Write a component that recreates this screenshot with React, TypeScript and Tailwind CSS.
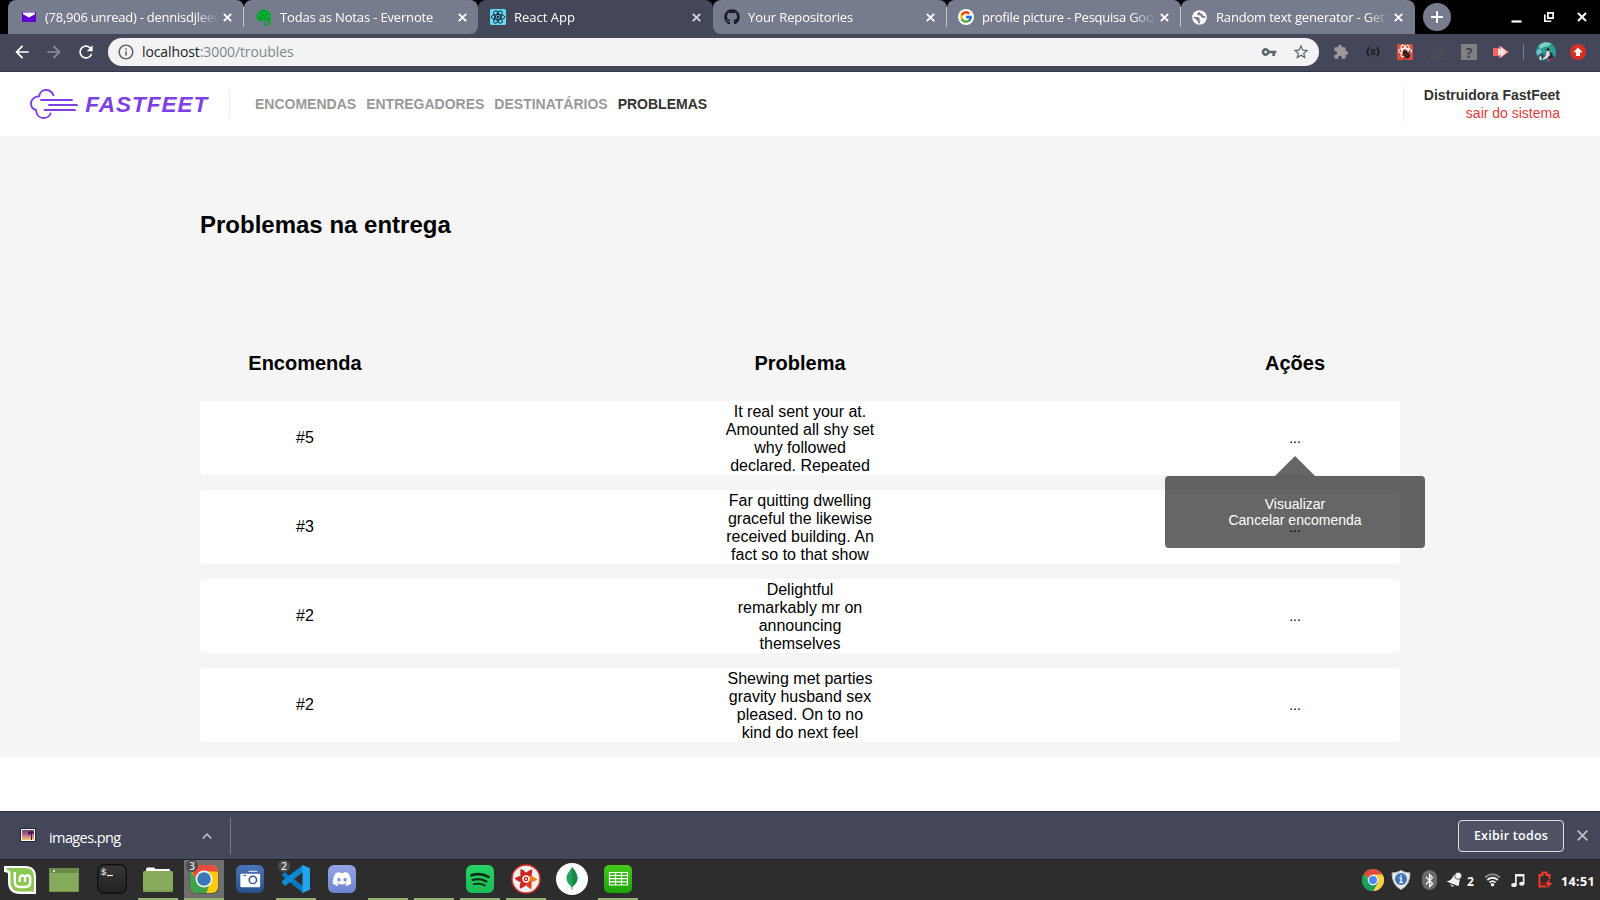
import React from 'react';
import { SiEvernote } from 'react-icons/si';
import { FaGithub, FaDiscord, FaBluetoothB } from 'react-icons/fa';
import { FcGoogle } from 'react-icons/fc';
import { MdVpnKey, MdStarBorder, MdExtension, MdArrowBack, MdArrowForward, MdRefresh, MdInfoOutline } from 'react-icons/md';

const uiFont = "font-['Open_Sans','Noto_Sans',sans-serif]";

function YahooMail() {
  return (
    <svg className="h-[10px] w-[14px]" viewBox="0 0 14 10">
      <rect width="14" height="10" fill="#5f01d1" />
      <path d="M1 .5h12v1.7L7 5.6 1 2.2z" fill="#fff" />
    </svg>
  );
}

function ReactBadge() {
  return (
    <svg className="size-4" viewBox="0 0 16 16">
      <rect width="16" height="16" rx="1.5" fill="#61dafb" />
      <g fill="none" stroke="#20303a" strokeWidth="1">
        <ellipse cx="8" cy="8" rx="6.8" ry="2.6" />
        <ellipse cx="8" cy="8" rx="6.8" ry="2.6" transform="rotate(60 8 8)" />
        <ellipse cx="8" cy="8" rx="6.8" ry="2.6" transform="rotate(120 8 8)" />
      </g>
      <circle cx="8" cy="8" r="1.5" fill="#20303a" />
    </svg>
  );
}

function Globe() {
  return (
    <svg className="size-[15px]" viewBox="0 0 15 15">
      <circle cx="7.5" cy="7.5" r="7.3" fill="#fff" />
      <path d="M8.500 1.500L5.500 3q-1 1.500.5 2.300l2.500.2 1 2 3.800.5V6.300l-2.300-.5-1-2L8 3.300z" fill="#777b8e" />
      <path d="M1.500 7h4.300l2 1.500-.5 1.800 1.200.5-.8 2.700-1.500-.3-.3-2.500-1.800-.5L3.500 8.500l-2-.2z" fill="#777b8e" />
    </svg>
  );
}

type TabInfo = { title: string; icon: React.ReactNode; active?: boolean; sep?: boolean; spacing: string; shape: string; width: string };

const tabs: TabInfo[] = [
  { title: '(78,906 unread) - dennisdjlee@', icon: <YahooMail />, sep: true, spacing: 'tracking-[-0.25px]', shape: 'pl-3 rounded-t-lg', width: 'w-[236px]' },
  { title: 'Todas as Notas - Evernote', icon: <SiEvernote className="size-[17px] text-[#00a82d]" />, spacing: 'tracking-[-0.16px]', shape: 'pl-[11px] rounded-t-lg rounded-br-lg', width: 'w-[234px]' },
  { title: 'React App', icon: <ReactBadge />, active: true, spacing: 'tracking-[0px]', shape: 'pl-[11px] rounded-t-lg', width: 'w-[235px]' },
  { title: 'Your Repositories', icon: <FaGithub className="size-4 text-[#1b1f23]" />, sep: true, spacing: 'tracking-[-0.1px]', shape: 'pl-[10px] rounded-t-lg rounded-bl-lg', width: 'w-[234px]' },
  {
    title: 'profile picture - Pesquisa Google',
    icon: <span className="flex size-4 items-center justify-center rounded-full bg-white"><FcGoogle className="size-[14px]" /></span>,
    sep: true, spacing: 'tracking-[-0.24px]', shape: 'pl-[10px] rounded-t-lg', width: 'w-[234px]',
  },
  { title: 'Random text generator - Get it', icon: <Globe />, spacing: 'tracking-[-0.18px]', shape: 'pl-[10px] rounded-t-lg', width: 'w-[234px]' },
];

function Tab({ tab }: { tab: TabInfo }) {
  return (
    <div className={`flex h-[34px] items-center ${tab.width} ${tab.shape} ${tab.active ? 'bg-[#44475a]' : 'bg-[#777b8e]'}`}>
      <span className="flex w-[17px] shrink-0 justify-center">{tab.icon}</span>
      <span className={`ml-2 w-[174px] shrink-0 overflow-hidden text-[13px] leading-[18px] whitespace-nowrap text-white [mask-image:linear-gradient(to_right,#000_150px,transparent_174px)] ${tab.spacing}`}>{tab.title}</span>
      <svg className="ml-[4px] size-[9px] shrink-0" viewBox="0 0 9 9">
        <path d="M.8.8l7.400 7.400M8.200.8L.8 8.200" stroke={tab.active ? '#d5d6dc' : '#fff'} strokeWidth="1.900" />
      </svg>
      {tab.sep && <span className="ml-auto h-5 w-px shrink-0 bg-[#c3c5cd]" />}
    </div>
  );
}

function TabStrip() {
  return (
    <div className="flex h-[34px] bg-black pl-2">
      {tabs.map((tab, i) => (
        <div key={tab.title} className={i === 1 || i === 3 ? 'bg-linear-to-b from-black from-50% to-[#44475a] to-50%' : ''}>
          <Tab tab={tab} />
        </div>
      ))}
      <div className="ml-2 flex h-[34px] items-center">
        <span className="flex size-7 items-center justify-center rounded-full bg-[#777b8e]">
          <svg className="size-3" viewBox="0 0 12 12"><path d="M6 0v12M0 6h12" stroke="#fff" strokeWidth="2" /></svg>
        </span>
      </div>
      <div className="ml-auto flex items-center pr-[13px]">
        <svg className="mr-[22px] size-[11px]" viewBox="0 0 11 11"><path d="M.5 9.5h10" stroke="#fff" strokeWidth="2.2" /></svg>
        <svg className="mr-[23px] size-[10px]" viewBox="0 0 10 10" fill="none" stroke="#fff"><path d="M3.9.9h5.2v5.2H3.9z" strokeWidth="1.7" /><path d="M.8 2.5v6.7h6.5" strokeWidth="1.6" /></svg>
        <svg className="size-[10px]" viewBox="0 0 10 10"><path d="M1 1l8 8M9 1L1 9" stroke="#fff" strokeWidth="2" /></svg>
      </div>
    </div>
  );
}

function Toolbar() {
  return (
    <div className="flex h-[38px] items-start border-b border-[#34364a] bg-[#44475a] pt-1">
      <div className="flex h-7 items-center pl-3 text-white">
        <MdArrowBack className="size-5" />
        <MdArrowForward className="ml-3 size-5 text-[#8d8f9b]" />
        <MdRefresh className="ml-3 size-5" />
      </div>
      <div className="ml-3 flex h-7 w-[1211px] items-center rounded-full bg-[#f1f3f4] pr-[9px] pl-[9px]">
        <MdInfoOutline className="size-[18px] text-[#5f6368]" />
        <span className="ml-[7px] text-[14px] leading-5 tracking-[-0.1px] text-[#80868b]">
          <span className="text-[#202124]">localhost</span>:3000/troubles
        </span>
        <MdVpnKey className="ml-auto size-4 text-[#5f6368]" />
        <MdStarBorder className="ml-[15px] size-[18px] text-[#5f6368]" />
      </div>
      <div className="flex h-7 items-center pl-[14px]">
        <MdExtension className="size-4 text-[#9b9b9b]" />
        <svg className="ml-[17px] h-[10px] w-[14px]" viewBox="0 0 14 10" fill="none" stroke="#15161c" strokeWidth="1.4">
          <path d="M3.500.8Q2 .8 2 2.500T.8 5Q2 5 2 7t1.500 2.200M10.500.8Q12 .8 12 2.500T13.200 5Q12 5 12 7t-1.500 2.200" /><path d="M4.700 2.900h4.600M4.700 5h4.600M4.700 7.100h4.600" strokeWidth="1.100" />
        </svg>
        <svg className="ml-[17px] size-4" viewBox="0 0 16 16">
          <rect width="16" height="16" fill="#dc4b38" />
          <g fill="none" stroke="#fff" strokeWidth="1.1">
            <ellipse cx="8" cy="7" rx="6.500" ry="2.500" /><ellipse cx="8" cy="7" rx="6.500" ry="2.500" transform="rotate(60 8 7)" /><ellipse cx="8" cy="7" rx="6.500" ry="2.500" transform="rotate(120 8 7)" />
          </g>
          <ellipse cx="9.500" cy="10.500" rx="3" ry="4" fill="#21191b" transform="rotate(-35 9.500 10.500)" /><path d="M5.500 9l2-3M12 8l1.500 1M8 14l-1 1.500" stroke="#21191b" />
          <path d="M7.500 10.500l4-3M8.500 12.500l4-3" stroke="#dc4b38" strokeWidth=".6" />
        </svg>
        <svg className="ml-4 size-4" viewBox="0 0 16 16" fill="#4c4d50">
          <path d="M0 12.500h3V16H0zM4 11h3v5H4zM8 9h3v7H8zM12 6h3v10h-3z" /><path d="M1 10l5-4 3 2 6-6" fill="none" stroke="#4b4c52" />
        </svg>
        <span className="ml-4 flex size-4 items-center justify-center bg-[#808080] text-[15px] leading-4 font-bold text-[#42455a]">?</span>
        <svg className="ml-4 size-4" viewBox="0 0 16 16">
          <path d="M0 4h6V1.500L16 8 6 14.500V12H0z" fill="#ff7b7b" /><path d="M3 5h5V2.500L13.500 8 8 13.500V11H3z" fill="#fff" opacity=".75" /><path d="M0 4h5v8H0z" fill="#f16367" />
        </svg>
        <span className="ml-[14px] h-4 w-px bg-[#7b7e8d]" />
        <svg className="ml-3 size-5" viewBox="0 0 20 20">
          <clipPath id="avatarClip"><circle cx="10" cy="10" r="10" /></clipPath>
          <g clipPath="url(#avatarClip)">
            <rect width="20" height="20" fill="#2d9c92" />
            <path d="M3 3l5-3 9 1-5 3-4 1-4 2z" fill="#7ed0c0" /><path d="M0 9l4-2 2 3-4 4z" fill="#6fc5d6" /><path d="M1 14l5-3 4 3 2 6H2z" fill="#35566a" />
            <path d="M13 10l3 1 2 5-3 4-4-5z" fill="#20323f" /><path d="M11 8l2 1 1 4-3 3-4 2 0-1.500 3-3z" fill="#f3ddd1" /><circle cx="12" cy="7.500" r="1.500" fill="#38291f" />
            <path d="M12 17l5-1 1 2-5 2z" fill="#b2274b" /><path d="M3 15l2-1 1 4-2 1z" fill="#d5e1df" />
          </g>
        </svg>
        <svg className="ml-[14px] size-4" viewBox="0 0 16 16"><circle cx="8" cy="8" r="8" fill="#d93025" /><path d="M8 3.500l4.500 4.700H10V12H6V8.200H3.500z" fill="#fff" /></svg>
      </div>
    </div>
  );
}

function Logo() {
  return (
    <svg className="h-8 w-[180px]" viewBox="30 88 180 32">
      <g fill="none" stroke="#7d40e7" strokeWidth="1.900" strokeLinecap="round">
        <path d="M53.500 95.300C52 91.500 49 90 46 90c-4 0-6.500 3-6.800 6.300C34 96.500 31 99.800 31 103.500c0 3.500 2 5.700 5 6.500.3 5 3.500 8 7.500 8 3.500 0 6-1.700 7-4.500" />
        <path d="M41 100h31M49 105h28M44.500 110H75" />
      </g>
      <text x="85.300" y="111.500" textLength="122" lengthAdjust="spacing" fill="#7d40e7" className="font-['Liberation_Sans',Arial,sans-serif] text-[22.500px] font-bold italic">FASTFEET</text>
    </svg>
  );
}

function AppHeader() {
  return (
    <header className="flex h-16 items-center bg-white pr-10 pl-[30px]">
      <Logo />
      <div className="ml-[19px] h-[30px] w-px bg-[#eee]" />
      <nav className="ml-[25px] flex gap-[10px] text-[14px] leading-4 font-bold text-[#999]">
        <span>ENCOMENDAS</span>
        <span>ENTREGADORES</span>
        <span>DESTINATÁRIOS</span>
        <span className="text-[#333]">PROBLEMAS</span>
      </nav>
      <div className="ml-auto flex h-[34px] items-center border-l border-[#eee] pl-5">
        <div className="text-right text-[14px] leading-[18px]">
          <div className="font-bold text-[#333]">Distruidora FastFeet</div>
          <div className="text-[#de3b3b]">sair do sistema</div>
        </div>
      </div>
    </header>
  );
}

const rows = [
  { id: '#5', lines: ['It real sent your at.', 'Amounted all shy set', 'why followed', 'declared. Repeated'], menu: true },
  { id: '#3', lines: ['Far quitting dwelling', 'graceful the likewise', 'received building. An', 'fact so to that show'] },
  { id: '#2', lines: ['Delightful', 'remarkably mr on', 'announcing', 'themselves'] },
  { id: '#2', lines: ['Shewing met parties', 'gravity husband sex', 'pleased. On to no', 'kind do next feel'] },
];

function ActionMenu() {
  return (
    <div className="absolute top-[55px] left-1/2 z-10 flex w-[260px] -translate-x-1/2 flex-col items-center">
      <div className="h-5 w-10 bg-black/60 [clip-path:polygon(50%_0,100%_100%,0_100%)]" />
      <div className="flex h-[72px] w-full flex-col items-center justify-center rounded bg-black/60 pb-px text-[14px] leading-4 text-white">
        <span>Visualizar</span>
        <span>Cancelar encomenda</span>
      </div>
    </div>
  );
}

function TroublesPage() {
  return (
    <main className="h-[621px] bg-[#f5f5f5] px-[200px] pt-[75px]">
      <h1 className="text-[24px] leading-[28px] font-bold">Problemas na entrega</h1>
      <div className="mt-[112px] flex h-[24px] justify-between text-center text-[20px] leading-6 font-bold">
        <span className="w-[210px]">Encomenda</span>
        <span>Problema</span>
        <span className="w-[210px]">Ações</span>
      </div>
      <div className="mt-[26px] flex flex-col gap-[15px]">
        {rows.map((row, i) => (
          <div key={i} className="flex h-[74px] items-center justify-between rounded bg-white text-center text-[16px] leading-[18px]">
            <span className="w-[210px]">{row.id}</span>
            <div className="h-[70px] w-[150px] overflow-hidden">
              {row.lines.map((line) => <div key={line} className="whitespace-nowrap">{line}</div>)}
            </div>
            <div className="relative flex h-full w-[210px] items-center justify-center">
              <span className="text-[14px]">...</span>
              {row.menu && <ActionMenu />}
            </div>
          </div>
        ))}
      </div>
    </main>
  );
}

function DownloadBar() {
  return (
    <div className={`flex h-[48px] items-center border-t border-[#2f3140] bg-[#44475a] text-white ${uiFont}`}>
      <svg className="mb-px ml-5 h-[14px] w-4" viewBox="0 0 16 14">
        <defs><linearGradient id="sunset" x1="0" y1="0" x2="0" y2="1"><stop stopColor="#6d3d77" /><stop offset=".6" stopColor="#ca7892" /><stop offset="1" stopColor="#f5cf65" /></linearGradient></defs>
        <rect width="16" height="14" fill="#29242b" /><rect x="1" y="1" width="14" height="12" fill="#fff" /><rect x="2" y="2" width="12" height="10" fill="url(#sunset)" />
        <path d="M8 4l3-1 3 1v2l-2-1 0 7h-1V6L8 7z" fill="#3b2142" />
      </svg>
      <span className="mt-[5px] ml-[13px] w-[153px] text-[14.500px] leading-5 tracking-[-0.6px]">images.png</span>
      <svg className="h-[6px] w-[10px]" viewBox="0 0 10 6"><path d="M.7 5.500L5 1.200l4.300 4.300" fill="none" stroke="#c0c1c8" strokeWidth="1.600" /></svg>
      <span className="ml-[18px] h-9 w-px bg-[#777a88]" />
      <span className="ml-auto flex h-8 w-[106px] items-center justify-center rounded border border-[#dcdde0] bg-[#505366] text-[12.500px] leading-[18px] font-semibold tracking-[0.24px]">Exibir todos</span>
      <svg className="mr-3 ml-[13px] size-[11px]" viewBox="0 0 11 11"><path d="M.7.7l9.600 9.600M10.300.7L.7 10.300" stroke="#bcbdc4" strokeWidth="1.900" /></svg>
    </div>
  );
}

function ChromeMark({ className }: { className: string }) {
  return (
    <svg className={className} viewBox="0 0 24 24">
      <circle cx="12" cy="12" r="12" fill="#4caf50" />
      <path d="M12 12L1.600 6A12 12 0 0 1 22.400 6z" fill="#dd4b3e" />
      <path d="M12 6h10.400A12 12 0 0 1 12 24l5.200-9z" fill="#ffcd46" />
      <path d="M1.600 6A12 12 0 0 0 12 24l5.200-9L12 12 6.800 15z" fill="#1a9f5c" />
      <circle cx="12" cy="12" r="5.600" fill="#fff" /><circle cx="12" cy="12" r="4.400" fill="#4688f4" />
    </svg>
  );
}

function Slot({ children, running, focused, count }: { children?: React.ReactNode; running?: boolean; focused?: boolean; count?: string }) {
  return (
    <div className={`relative flex h-full w-10 items-center justify-center border-b-2 ${running ? 'border-[#92b372]' : 'border-transparent'} ${focused ? 'bg-[#6f6f6f]' : ''}`}>
      {children}
      {count && <span className="absolute top-0 left-[2px] flex size-3 items-center justify-center rounded-full bg-[#4b4b4b] text-[10px] leading-3 font-semibold text-[#e5edf5]">{count}</span>}
    </div>
  );
}

function FolderIcon() {
  return (
    <svg className="h-[25px] w-[30px]" viewBox="0 0 30 25">
      <path d="M3 5V2l1-1.500h7L12.500 2H26q1 0 1 1v3H3z" fill="#fff" /><rect y="4" width="30" height="21" rx="1.500" fill="#87ab5c" /><path d="M0 24h30" stroke="#6f8d4c" />
    </svg>
  );
}

function Taskbar() {
  return (
    <div className={`flex h-[41px] items-stretch border-t border-[#20202a] bg-[#2d2d2d] ${uiFont}`}>
      <div className="flex w-10 items-center justify-center">
        <svg className="h-[30px] w-8" viewBox="0 0 32 30">
          <path d="M0 1h21q11 0 11 11v17H16Q4 29 4 17V9Q4 7 0 7z" fill="#fff" />
          <path d="M3 3h18q9 0 9 9v14.500H16q-9.500 0-9.500-9.500V9Q6.500 5 3 5z" fill="#8bc751" />
          <path d="M10.800 7V17q0 5 5 5h5.400q5 0 5-5v-4q0-2.500-2.600-2.500T21 13v4M21 17v-4q0-2.500-2.600-2.500T15.800 13v4" fill="none" stroke="#fff" strokeWidth="2.400" />
        </svg>
      </div>
      <div className="ml-1 flex w-10 items-center justify-center">
        <svg className="h-6 w-[30px]" viewBox="0 0 30 24"><rect width="30" height="24" rx="1" fill="#87ab5c" /><rect width="30" height="5" rx="1" fill="#6a8a49" /><circle cx="5" cy="3" r="1" fill="#fff" /><path d="M0 23.500h30M.5 0v24M29.500 0v24" stroke="#73934f" /></svg>
      </div>
      <div className="ml-2 flex gap-[6px]">
        <Slot>
          <svg className="size-[30px]" viewBox="0 0 30 30">
            <defs><linearGradient id="termGrad" x1="0" y1="0" x2="0" y2="1"><stop stopColor="#383838" /><stop offset="1" stopColor="#202020" /></linearGradient></defs>
            <rect x=".7" y=".7" width="28.600" height="28.600" rx="6" fill="url(#termGrad)" stroke="#111" strokeWidth="1.400" />
            <text x="4" y="10.500" fill="#fff" fontSize="9" className="font-['Liberation_Mono',monospace]">$</text><path d="M10 11.500h6" stroke="#fff" strokeWidth="1.200" />
          </svg>
        </Slot>
        <Slot running><FolderIcon /></Slot>
        <Slot running focused count="3">
          <svg className="size-[30px]" viewBox="0 0 30 30">
            <clipPath id="chromeTile"><rect x="1" y="1" width="28" height="28" rx="6" /></clipPath>
            <rect x=".5" y="1" width="29" height="29" rx="6" fill="#444" opacity=".6" />
            <g clipPath="url(#chromeTile)">
              <rect width="30" height="30" fill="#fdc90b" /><path d="M0 0h30v7.500H15L8 19z" fill="#e84c3d" /><path d="M0 4l8.500 14 12 2L17 30H0z" fill="#3fa24a" />
              <circle cx="15" cy="15" r="8.500" fill="#f2f2f2" /><circle cx="15" cy="15" r="6.800" fill="#3878b8" />
            </g>
          </svg>
        </Slot>
        <Slot>
          <svg className="size-7" viewBox="0 0 29 29">
            <defs><linearGradient id="camGrad" x1="0" y1="0" x2="0" y2="1"><stop stopColor="#4a76b8" /><stop offset="1" stopColor="#284f8c" /></linearGradient></defs>
            <rect width="29" height="29" rx="6" fill="url(#camGrad)" />
            <path d="M13 6.500h9" stroke="#fff" /><rect x="4.500" y="9" width="20.500" height="14" rx="1" fill="#fff" /><path d="M7.500 11h3" stroke="#2f5896" /><circle cx="17.500" cy="15.500" r="3.800" fill="#fff" stroke="#2d5592" strokeWidth="1.500" />
          </svg>
        </Slot>
        <Slot running count="2">
          <svg className="size-7" viewBox="0 0 28 28">
            <path d="M0 9l3-2 18 14v7L0 11z" fill="#0878bd" /><path d="M0 18l3 3L21 7V0L0 16z" fill="#0d8ad2" /><path d="M20.500 0L28 3.300v21.400L20.500 28z" fill="#24a6ef" />
          </svg>
        </Slot>
        <Slot>
          <span className="flex size-7 items-center justify-center rounded-[6px] bg-linear-to-b from-[#93a5e6] to-[#6f85d1]"><FaDiscord className="size-5 text-white" /></span>
        </Slot>
        <Slot running />
        <Slot running />
        <Slot running>
          <span className="flex size-7 items-center justify-center rounded-[6px] bg-linear-to-b from-[#25d466] to-[#1cbb55]">
            <svg className="h-[15px] w-5" viewBox="0 0 20 15" fill="none" stroke="#0d2b19" strokeLinecap="round"><path d="M1.500 3.300q9-3 17 1.500" strokeWidth="2.600" /><path d="M2.500 8q8-2.300 14 1.500" strokeWidth="2.100" /><path d="M3.500 12.300q6.500-1.800 11.500 1.200" strokeWidth="1.700" /></svg>
          </span>
        </Slot>
        <Slot running>
          <svg className="size-[30px]" viewBox="-15 -15 30 30">
            <circle r="14" fill="#f3f1f0" stroke="#e02d2a" strokeWidth="1.400" />
            {[0, 60, 120, 180, 240, 300].map((a, i) => <path key={a} d="M-2.500 0L-3-6Q-1.500-9 .5-11.500Q2.300-9 3-6L2.500 0z" fill={i === 2 ? '#f07d16' : i === 3 ? '#e0401d' : '#c92323'} transform={`rotate(${a - 30})`} />)}
            <circle r="3" fill="#c61f23" stroke="#fff" strokeWidth="1.400" /><circle r="1" fill="#fff" />
          </svg>
        </Slot>
        <Slot><span className="flex size-8 shrink-0 items-center justify-center rounded-full bg-white">
          <svg className="h-6 w-3" viewBox="0 0 12 24"><path d="M6 0C9 4 11.500 7 11.500 11S9 17.500 6.500 20L6.300 23h-.6l-.2-3C3 17.500.5 15 .5 11S4 4 6 0z" fill="#21a35a" /><path d="M6 0C9 4 11.500 7 11.500 11S9 17.500 6.500 20L6 3z" fill="#168a48" /></svg>
        </span></Slot>
        <Slot running>
          <svg className="size-7" viewBox="0 0 28 28">
            <defs><linearGradient id="sheetGrad" x1="0" y1="0" x2="0" y2="1"><stop stopColor="#48c91b" /><stop offset="1" stopColor="#1ba309" /></linearGradient></defs>
            <rect width="28" height="28" rx="5" fill="url(#sheetGrad)" /><path d="M5.500 7.500h18v12.500h-18zM5.500 10.500h18M5.500 13.700h18M5.500 16.800h18M11.500 7.500v12.500M17.500 7.500v12.500" fill="none" stroke="#fff" strokeWidth="1.200" />
          </svg>
        </Slot>
      </div>
      <div className="ml-auto flex items-center pr-[4px] text-white">
        <ChromeMark className="size-[22px]" />
        <svg className="ml-[7px] h-5 w-5" viewBox="0 0 20 20"><path d="M10 .5q4 2.500 9 2.500 0 12-9 16.500Q1 15 1 3q5 0 9-2.500z" fill="#e9e9e9" stroke="#bbb" /><circle cx="10" cy="9" r="6" fill="#3f76b8" /><path d="M10 5v1.500M8.500 8h1.700v4M8.300 12.300h3.600" fill="none" stroke="#fff" strokeWidth="1.300" /></svg>
        <span className="ml-[11px] flex h-5 w-[15px] items-center justify-center rounded-full bg-[#6a6a6a]"><FaBluetoothB className="size-[15px]" /></span>
        <svg className="ml-[9px] size-4" viewBox="0 0 16 16" fill="#f0f0f0"><path d="M.5 9.500q5-1 6.500-5Q8 2.500 9.500 2L14 8q-1 1-1 5l-1 1z" /><circle cx="12.200" cy="3.800" r="3.500" stroke="#2d2d2d" strokeWidth=".7" /><path d="M4 12l4 2q-2 2-4-2z" /></svg>
        <span className="ml-[5px] w-2 pt-[3px] text-[12px] leading-4 font-bold">2</span>
        <svg className="ml-[9px] h-[14px] w-[17px]" viewBox="0 0 17 14" fill="none" stroke="#f0f0f0" strokeWidth="1.700"><path d="M1 4.500q7.500-6.500 15 0" stroke="#888" /><path d="M3.200 7q5.300-4.500 10.600 0M5.500 9.500q3-2.600 6 0" /><circle cx="8.500" cy="11.800" r=".9" fill="#fff" /></svg>
        <svg className="ml-[10px] h-[15px] w-[14px]" viewBox="0 0 14 15" fill="#f0f0f0"><path d="M4 1h9.500v9.500h-1.700V3.500H5.700V12H4z" /><ellipse cx="3" cy="12" rx="2.800" ry="2" /><ellipse cx="10.800" cy="10.800" rx="2.700" ry="2" /></svg>
        <svg className="ml-[13px] h-[18px] w-[15px]" viewBox="0 0 15 18"><path d="M8 15.500H1.500V4h3V1.500h4V4h3v4" fill="none" stroke="#f9392c" strokeWidth="2" /><path d="M11.500 8L7 13.500h3L8.500 18l6-6h-3z" fill="#f9392c" /><path d="M3.500 11h4v2h-4z" fill="#a30f0f" /></svg>
        <span className="ml-[8px] w-[35px] pt-[3px] text-[12.500px] leading-5 font-bold tracking-[0.4px] whitespace-nowrap">14:51</span>
      </div>
    </div>
  );
}

export default function App() {
  return (
    <div className="flex h-[900px] w-[1600px] flex-col overflow-hidden bg-white font-['Liberation_Sans',Arial,sans-serif] text-black">
      <div className={uiFont}>
        <TabStrip />
        <Toolbar />
      </div>
      <AppHeader />
      <TroublesPage />
      <div className="flex-1 bg-white" />
      <DownloadBar />
      <Taskbar />
    </div>
  );
}
